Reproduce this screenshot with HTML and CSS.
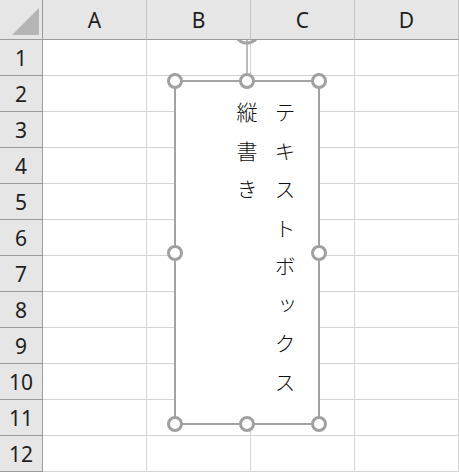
FILE: index.html
```html
<!DOCTYPE html>
<html lang="ja">
<head>
<meta charset="utf-8">
<link rel="stylesheet" href="styles.css">
</head>
<body>
<div class="sheet">
  <div class="grid">
    <div class="corner hd"><svg class="tri" width="43" height="40" viewBox="0 0 43 40"><polygon points="12,35 39,35 39,8" fill="#b5b5b5"/></svg></div>
    <div class="colh hd">A</div>
    <div class="colh hd">B</div>
    <div class="colh hd">C</div>
    <div class="colh hd last">D</div>

    <div class="rowh">1</div><div class="cell"></div><div class="cell"></div><div class="cell"></div><div class="cell last"></div>
    <div class="rowh">2</div><div class="cell"></div><div class="cell"></div><div class="cell"></div><div class="cell last"></div>
    <div class="rowh">3</div><div class="cell"></div><div class="cell"></div><div class="cell"></div><div class="cell last"></div>
    <div class="rowh">4</div><div class="cell"></div><div class="cell"></div><div class="cell"></div><div class="cell last"></div>
    <div class="rowh">5</div><div class="cell"></div><div class="cell"></div><div class="cell"></div><div class="cell last"></div>
    <div class="rowh">6</div><div class="cell"></div><div class="cell"></div><div class="cell"></div><div class="cell last"></div>
    <div class="rowh">7</div><div class="cell"></div><div class="cell"></div><div class="cell"></div><div class="cell last"></div>
    <div class="rowh">8</div><div class="cell"></div><div class="cell"></div><div class="cell"></div><div class="cell last"></div>
    <div class="rowh">9</div><div class="cell"></div><div class="cell"></div><div class="cell"></div><div class="cell last"></div>
    <div class="rowh">10</div><div class="cell"></div><div class="cell"></div><div class="cell"></div><div class="cell last"></div>
    <div class="rowh">11</div><div class="cell"></div><div class="cell"></div><div class="cell"></div><div class="cell last"></div>
    <div class="rowh">12</div><div class="cell"></div><div class="cell"></div><div class="cell"></div><div class="cell last"></div>
  </div>

  <svg class="overlay" width="459" height="472" viewBox="0 0 459 472">
    <path d="M236.6 37 A12 12 0 0 0 258.3 35.1" fill="none" stroke="#a3a3a3" stroke-width="3"/>
    <line x1="247" y1="38" x2="247" y2="74" stroke="#a3a3a3" stroke-width="1.5"/>
    <rect x="175" y="81" width="144" height="343" fill="#fff" stroke="#a3a3a3" stroke-width="2"/>
  </svg>

  <div class="textbox">
    <div class="vtext">テキストボックス<br>縦書き</div>
  </div>

  <svg class="handles" width="459" height="472" viewBox="0 0 459 472">
    <g fill="#fff" stroke="#a0a0a0" stroke-width="3">
      <circle cx="175" cy="81" r="6.5"/>
      <circle cx="247" cy="81" r="6.5"/>
      <circle cx="319" cy="81" r="6.5"/>
      <circle cx="175" cy="253" r="6.5"/>
      <circle cx="319" cy="253" r="6.5"/>
      <circle cx="175" cy="424" r="6.5"/>
      <circle cx="247" cy="424" r="6.5"/>
      <circle cx="319" cy="424" r="6.5"/>
    </g>
  </svg>
</div>
</body>
</html>
```

FILE: styles.css
```css
* { box-sizing: border-box; }
html, body { margin: 0; padding: 0; background: #fff; }
body { width: 459px; height: 472px; overflow: hidden; }

.sheet {
  position: relative;
  width: 459px;
  height: 472px;
}

.grid {
  display: grid;
  grid-template-columns: 43px 104px 104px 104px 104px;
  grid-template-rows: 40px repeat(12, 36px);
  font-family: "Noto Sans", "Noto Sans CJK JP", sans-serif;
  color: #1e1e1e;
}

.hd {
  position: relative;
  z-index: 3;
  background: #e6e6e6;
  border-bottom: 1px solid #9c9c9c;
}

.corner {
  border-right: 1px solid #9c9c9c;
}
.tri { display: block; }

.colh {
  display: flex;
  align-items: center;
  justify-content: center;
  font-size: 21px;
  border-right: 1px solid #c3c3c3;
  padding-top: 1px;
}

.rowh {
  display: flex;
  align-items: center;
  justify-content: center;
  background: #e6e6e6;
  font-size: 21px;
  border-right: 1px solid #9c9c9c;
  border-bottom: 1px solid #9c9c9c;
}

.cell {
  border-right: 1px solid #d4d4d4;
  border-bottom: 1px solid #d4d4d4;
}

.overlay, .handles {
  position: absolute;
  left: 0;
  top: 0;
  z-index: 1;
}
.handles { z-index: 2; }

.textbox {
  position: absolute;
  left: 175px;
  top: 81px;
  width: 144px;
  height: 343px;
  z-index: 1;
  display: flex;
  justify-content: flex-end;
  padding: 21px 15px 0 0;
}

.vtext {
  writing-mode: vertical-rl;
  font-family: "Noto Sans CJK JP", sans-serif;
  font-weight: 300;
  font-size: 21px;
  line-height: 38px;
  letter-spacing: 17.5px;
  color: #111;
}
```
